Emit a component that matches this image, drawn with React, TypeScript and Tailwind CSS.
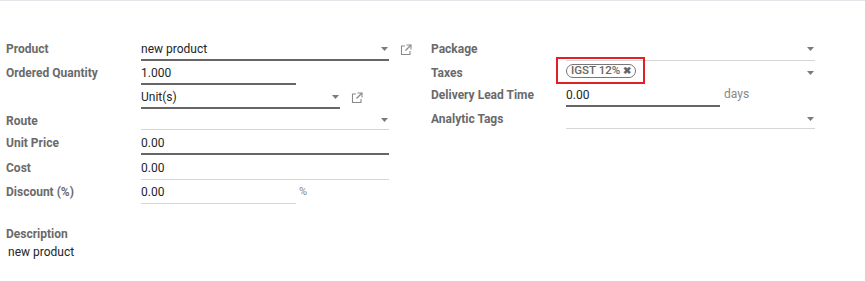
import React from "react";

const Caret = () => (
  <svg width="7" height="4" viewBox="0 0 7 4" className="shrink-0">
    <polygon points="0,0 7,0 3.5,4" fill="#7a7a7a" />
  </svg>
);

const Ext = () => (
  <svg width="12" height="12" viewBox="0 0 12 12" className="shrink-0">
    <path d="M5 2H1.5v8.5H10V7" fill="none" stroke="#8a8a8a" strokeWidth="1.1" />
    <path d="M6.5 1h4.5v4.5" fill="none" stroke="#8a8a8a" strokeWidth="1.1" />
    <path d="M11 1L5.5 6.5" fill="none" stroke="#8a8a8a" strokeWidth="1.3" />
  </svg>
);

type FieldProps = {
  value?: string;
  width: number;
  dark?: boolean;
  select?: boolean;
  children?: React.ReactNode;
};

const Field = ({ value, width, dark, select, children }: FieldProps) => (
  <div
    className={
      "flex items-start h-[21px] " +
      (dark ? "border-b-2 border-[#666666]" : "border-b border-[#d6d6d6]")
    }
    style={{ width }}
  >
    <div className="flex-1 leading-[18px] text-[12px] text-[#212529] whitespace-nowrap">
      {children ?? value}
    </div>
    {select && (
      <div className="flex items-center h-[18px] pr-[1px]">
        <Caret />
      </div>
    )}
  </div>
);

const Label = ({ children, mb = "mb-[3px]" }: { children: React.ReactNode; mb?: string }) => (
  <div
    className={
      "w-[141px] shrink-0 pl-[6px] text-[12px] font-bold text-[#6a6a6a] leading-[18px] whitespace-nowrap " +
      mb
    }
  >
    {children}
  </div>
);

export default function App() {
  return (
    <div
      className="w-[865px] h-[281px] bg-white border-t border-[#e2e6ea] relative"
      style={{ fontFamily: "Roboto, 'Liberation Sans', sans-serif" }}
    >
      <div className="flex pt-[39px]">
        {/* left column */}
        <div className="w-[425px] shrink-0">
          <div className="flex items-end h-[21px]">
            <Label>Product</Label>
            <Field value="new product" width={248} dark select />
            <div className="ml-[11px] mb-[5px]">
              <Ext />
            </div>
          </div>
          <div className="flex items-end h-[24px]">
            <Label>Ordered Quantity</Label>
            <Field value="1.000" width={155} dark />
          </div>
          <div className="flex items-end h-[24px]">
            <Label>&nbsp;</Label>
            <Field value="Unit(s)" width={199} dark select />
            <div className="ml-[11px] mb-[5px]">
              <Ext />
            </div>
          </div>
          <div className="flex items-end h-[21px]">
            <Label mb="mb-[0px]">Route</Label>
            <div className="flex items-end h-[21px] w-[248px] border-b border-[#d6d6d6]">
              <div className="flex-1" />
              <div className="flex items-center h-[18px] pr-[1px]">
                <Caret />
              </div>
            </div>
          </div>
          <div className="flex items-end h-[25px]">
            <Label>Unit Price</Label>
            <Field value="0.00" width={248} dark />
          </div>
          <div className="flex items-end h-[25px]">
            <Label>Cost</Label>
            <Field value="0.00" width={248} />
          </div>
          <div className="flex items-end h-[24px]">
            <Label>Discount (%)</Label>
            <Field value="0.00" width={155} />
            <div className="ml-[3px] mb-[3px] text-[11px] text-[#888] leading-[18px]">%</div>
          </div>
        </div>

        {/* right column */}
        <div className="flex-1">
          <div className="flex items-end h-[21px]">
            <Label>Package</Label>
            <Field width={249} select />
          </div>
          <div className="flex items-end h-[24px]">
            <Label>Taxes</Label>
            <div className="flex items-start h-[21px] w-[249px] relative">
              <div className="flex-1 flex items-start">
                <span className="inline-flex items-center h-[14px] px-[4px] gap-[3px] rounded-full border-[1.5px] border-[#777] text-[11.5px] font-medium text-[#666] leading-none">
                  IGST 12%
                  <span className="text-[10px] font-bold text-[#666]">✖</span>
                </span>
              </div>
              <div className="flex items-center h-[18px] pr-[1px]">
                <Caret />
              </div>
              <div className="absolute left-[-10px] top-[-7px] w-[89px] h-[27px] border-2 border-[#e31e24]" />
            </div>
          </div>
          <div className="flex items-end h-[22px]">
            <Label>Delivery Lead Time</Label>
            <Field value="0.00" width={154} dark />
            <div className="ml-[4px] mb-[4px] text-[12px] text-[#888] leading-[18px]">days</div>
          </div>
          <div className="flex items-end h-[22px]">
            <Label mb="mb-[1px]">Analytic Tags</Label>
            <div className="flex items-end h-[21px] w-[249px] border-b border-[#d6d6d6]">
              <div className="flex-1" />
              <div className="flex items-center h-[18px] pr-[1px]">
                <Caret />
              </div>
            </div>
          </div>
        </div>
      </div>

      <div className="mt-[21px] pl-[6px]">
        <div className="text-[12px] font-bold text-[#6a6a6a] leading-[18px]">Description</div>
        <div className="pl-[2px] text-[12px] text-[#212529] leading-[18px]">new product</div>
      </div>
    </div>
  );
}
